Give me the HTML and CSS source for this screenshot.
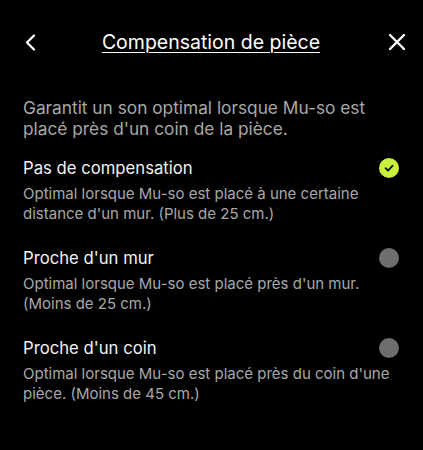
FILE: index.html
```html
<!DOCTYPE html>
<html lang="fr">
  <head>
    <meta charset="UTF-8" />
    <title>Compensation de pièce</title>
    <link rel="stylesheet" href="styles.css">
  </head>
  <body>
    <header class="barre">
      <button class="icone retour" aria-label="Retour">
        <svg width="11" height="17" viewBox="0 0 11 17">
          <path d="M9 1.5 L2 8.5 L9 15.5" fill="none" stroke="#fff" stroke-width="2.2" stroke-linecap="round" stroke-linejoin="round" />
        </svg>
      </button>
      <h1>Compensation de pièce</h1>
      <button class="icone fermer" aria-label="Fermer">
        <svg width="18" height="18" viewBox="0 0 18 18">
          <path d="M2 2 L16 16 M16 2 L2 16" fill="none" stroke="#fff" stroke-width="2.4" stroke-linecap="round" />
        </svg>
      </button>
    </header>

    <p class="intro">Garantit un son optimal lorsque Mu-so est placé près d'un coin de la pièce.</p>

    <ul class="options">
      <li class="option choisie">
        <div class="titre">
          <span>Pas de compensation</span>
          <span class="pastille">
            <svg width="10" height="10" viewBox="0 0 10 10">
              <path d="M1.5 5.2 L4 7.6 L8.6 2.6" fill="none" stroke="#111" stroke-width="1.8" stroke-linecap="round" stroke-linejoin="round" />
            </svg>
          </span>
        </div>
        <p>Optimal lorsque Mu-so est placé à une certaine distance d'un mur. (Plus de 25 cm.)</p>
      </li>
      <li class="option">
        <div class="titre">
          <span>Proche d'un mur</span>
          <span class="pastille"></span>
        </div>
        <p>Optimal lorsque Mu-so est placé près d'un mur. (Moins de 25 cm.)</p>
      </li>
      <li class="option">
        <div class="titre">
          <span>Proche d'un coin</span>
          <span class="pastille"></span>
        </div>
        <p>Optimal lorsque Mu-so est placé près du coin d'une pièce. (Moins de 45 cm.)</p>
      </li>
    </ul>
  </body>
</html>
```

FILE: styles.css
```css
body {
  margin: 0;
  padding: 0 17px 0 23px;
  background-color: #000;
  color: #f2f2f2;
  font-family: Inter, "Liberation Sans", sans-serif;
}
.barre {
  display: flex;
  align-items: center;
  justify-content: space-between;
  height: 40px;
  margin-top: 22px;
}
.icone {
  display: flex;
  align-items: center;
  padding: 0;
  border: 0;
  background: none;
}
.retour {
  margin-left: 2px;
}
h1 {
  margin: 0 0 0 -2px;
  font-size: 19.5px;
  font-weight: normal;
  color: #fff;
  text-decoration: underline;
  text-underline-offset: 3px;
  text-decoration-thickness: 1px;
}
.intro {
  margin: 35px 0 0;
  padding-right: 20px;
  font-size: 17.3px;
  line-height: 21px;
  color: #a8a8a8;
}
.options {
  list-style: none;
  margin: 18px 0 0;
  padding: 0 7px 0 0;
}
.option {
  margin-bottom: 23px;
}
.titre {
  display: flex;
  align-items: center;
  justify-content: space-between;
  height: 22px;
  font-size: 16.7px;
}
.pastille {
  display: flex;
  align-items: center;
  justify-content: center;
  width: 20px;
  height: 20px;
  border-radius: 50%;
  background-color: #6e6e6e;
}
.choisie .pastille {
  background-color: #c9f03c;
}
.option p {
  margin: 5px -7px 0 0;
  font-size: 15px;
  line-height: 20px;
  color: #a8a8a8;
}
```
